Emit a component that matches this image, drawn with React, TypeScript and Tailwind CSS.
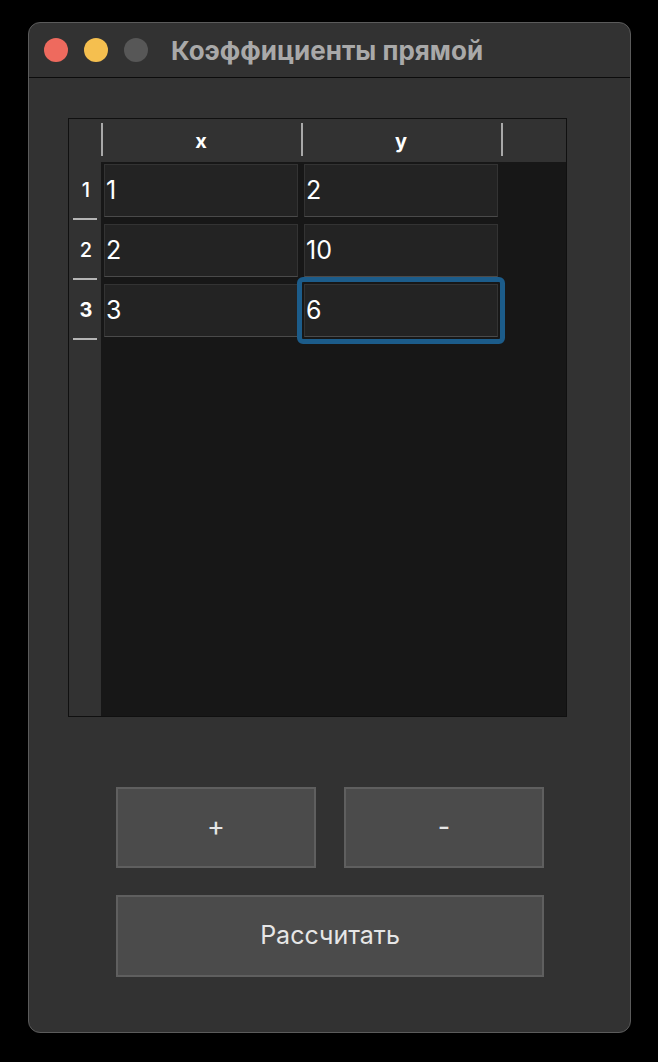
import React from 'react';

const rows = [
  { id: 1, x: '1', y: '2' },
  { id: 2, x: '2', y: '10' },
  { id: 3, x: '3', y: '6' },
];

const font = { fontFamily: 'Inter, "Noto Sans", sans-serif' };

function Cell({ value, focused }: { value: string; focused?: boolean }) {
  return (
    <div className="relative mx-[3px] h-[53px] w-[194px]">
      {focused && (
        <div className="absolute -inset-[7px] rounded-[6px] border-[5px] border-[#1c5c8a]" />
      )}
      <div className="flex h-full items-center border border-[#333] border-b-[#4a4a4a] bg-[#232323] pl-[1px] text-[25px] text-white">
        {value}
      </div>
    </div>
  );
}

export default function App() {
  return (
    <div className="h-[1062px] w-[658px] bg-black pt-[22px] pl-[28px]" style={font}>
      {/* Window */}
      <div className="flex h-[1011px] w-[603px] flex-col overflow-hidden rounded-[12px] border border-[#5b5b5b] bg-[#323232]">
        {/* Title bar */}
        <div className="flex h-[55px] shrink-0 items-center border-b border-[#0c0c0c] pl-[15px]">
          <div className="flex gap-[16px]">
            <span className="h-[24px] w-[24px] rounded-full bg-[#ee6a5e]" />
            <span className="h-[24px] w-[24px] rounded-full bg-[#f5bf4f]" />
            <span className="h-[24px] w-[24px] rounded-full bg-[#575757]" />
          </div>
          <span className="ml-[23px] text-[26px] font-bold text-[#a9a9a9]">Коэффициенты прямой</span>
        </div>

        {/* Content */}
        <div className="flex flex-col pl-[39px] pt-[40px]">
          {/* Table */}
          <div className="flex h-[599px] w-[499px] flex-col border border-[#101010] bg-[#171717]">
            {/* Header */}
            <div className="flex h-[43px] shrink-0 bg-[#323232]">
              <div className="w-[32px]" />
              {['x', 'y'].map((h) => (
                <div key={h} className="relative flex w-[200px] items-center justify-center text-[20px] font-bold text-white">
                  <span className="absolute left-0 top-[4px] h-[33px] w-[2px] bg-[#a9a9a9]" />
                  {h}
                </div>
              ))}
              <div className="relative flex-1">
                <span className="absolute left-0 top-[4px] h-[33px] w-[2px] bg-[#a9a9a9]" />
              </div>
            </div>

            {/* Body */}
            <div className="flex flex-1">
              <div className="flex w-[32px] flex-col bg-[#323232]">
                {rows.map((r) => (
                  <div key={r.id} className="flex h-[60px] flex-col items-center">
                    <div className={`flex h-[56px] items-center pl-[2px] text-[20px] text-white ${r.id === 3 ? 'font-bold' : 'font-medium'}`}>
                      {r.id}
                    </div>
                    <span className="h-[2px] w-[24px] bg-[#b5b5b5]" />
                  </div>
                ))}
              </div>
              <div className="flex flex-col pt-[2px]">
                {rows.map((r) => (
                  <div key={r.id} className="flex h-[60px]">
                    <Cell value={r.x} />
                    <Cell value={r.y} focused={r.id === 3} />
                  </div>
                ))}
              </div>
            </div>
          </div>

          {/* Buttons */}
          <div className="ml-[48px] mt-[70px] flex w-[428px] flex-col gap-[27px]">
            <div className="flex justify-between">
              <button className="h-[81px] w-[200px] border-2 border-[#5f5f5f] bg-[#4b4b4b] text-[27px] text-[#e6e6e6]">+</button>
              <button className="h-[81px] w-[200px] border-2 border-[#5f5f5f] bg-[#4b4b4b] text-[27px] text-[#e6e6e6]">-</button>
            </div>
            <button className="h-[82px] w-[428px] border-2 border-[#5f5f5f] bg-[#4b4b4b] text-[25px] text-[#e6e6e6]">Рассчитать</button>
          </div>
        </div>
      </div>
    </div>
  );
}
